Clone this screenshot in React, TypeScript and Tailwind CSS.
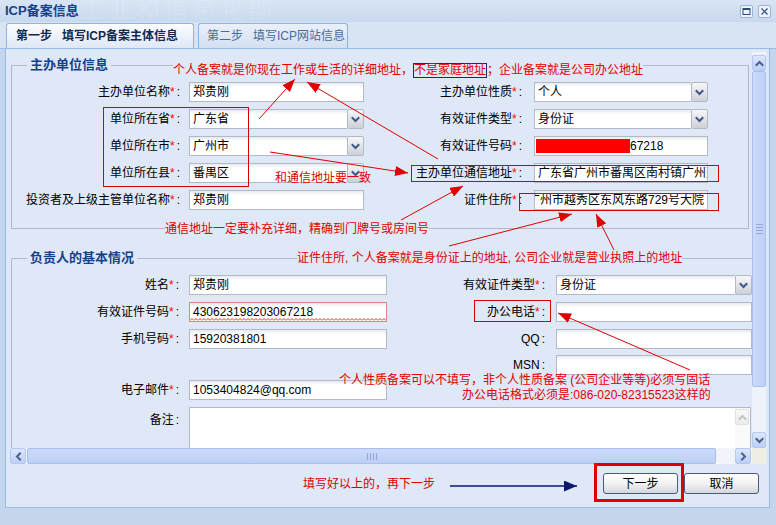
import React from "react";

type Dir = "up" | "down" | "left" | "right";

function Chev({ dir = "down", color = "#3f5b88" }: { dir?: Dir; color?: string }) {
  const d: Record<Dir, string> = {
    down: "M1.5 3 L4.5 6 L7.5 3",
    up: "M1.5 6 L4.5 3 L7.5 6",
    left: "M6 1.5 L3 4.5 L6 7.5",
    right: "M3 1.5 L6 4.5 L3 7.5",
  };
  return (
    <svg width="9" height="9" viewBox="0 0 9 9">
      <path d={d[dir]} stroke={color} strokeWidth="2" fill="none" strokeLinecap="square" />
    </svg>
  );
}

function Lbl({ children, req = true, className = "" }: { children?: React.ReactNode; req?: boolean; className?: string }) {
  return (
    <div className={`flex h-[20px] items-center justify-end whitespace-nowrap ${className}`}>
      <span>{children}</span>
      {req && <span className="text-[#ff0000]">*</span>}
      <span className="ml-[2px]">:</span>
    </div>
  );
}

function TextBox({
  children,
  className = "",
  invalid = false,
  right = false,
}: {
  children?: React.ReactNode;
  className?: string;
  invalid?: boolean;
  right?: boolean;
}) {
  return (
    <div
      className={`relative flex h-[20px] items-center overflow-hidden whitespace-nowrap border bg-[linear-gradient(#e6e9ee,#ffffff_4px)] px-[3px] ${
        invalid ? "border-[#d98a80]" : "border-[#b5b8c8]"
      } ${right ? "justify-end" : ""} ${className}`}
    >
      {children}
      {invalid && (
        <svg className="absolute bottom-0 left-0" width="100%" height="3">
          <defs>
            <pattern id="wave" width="4" height="3" patternUnits="userSpaceOnUse">
              <path d="M0 2.5 L2 0.5 L4 2.5" stroke="#e03020" strokeWidth="1" fill="none" />
            </pattern>
          </defs>
          <rect width="100%" height="3" fill="url(#wave)" />
        </svg>
      )}
    </div>
  );
}

function Combo({ value, className = "" }: { value: string; className?: string }) {
  return (
    <div className={`flex h-[20px] ${className}`}>
      <div className="flex flex-1 items-center overflow-hidden whitespace-nowrap border-y border-l border-[#b5b8c8] bg-[linear-gradient(#e6e9ee,#ffffff_4px)] px-[3px]">
        {value}
      </div>
      <div className="flex h-[20px] w-[17px] items-center justify-center rounded-[2px] border border-[#b3b8c4] bg-gradient-to-b from-[#f7f7f8] to-[#cdd1d8]">
        <Chev dir="down" color="#40598a" />
      </div>
    </div>
  );
}

function SBtn({ dir, disabled = false }: { dir: Dir; disabled?: boolean }) {
  return (
    <div
      className={`flex h-[16px] w-[14px] shrink-0 items-center justify-center rounded-[2px] border ${
        disabled
          ? "border-[#e0e0e0] bg-gradient-to-b from-[#f8f8f8] to-[#ececec]"
          : "border-[#b5c8f2] bg-gradient-to-b from-[#dde7fd] to-[#bccff8]"
      }`}
    >
      <Chev dir={dir} color={disabled ? "#c6c6c6" : "#4d6185"} />
    </div>
  );
}

function HBtn({ dir }: { dir: Dir }) {
  return (
    <div className="flex h-[16px] w-[16px] shrink-0 items-center justify-center rounded-[2px] border border-[#b5c8f2] bg-gradient-to-b from-[#dde7fd] to-[#bccff8]">
      <Chev dir={dir} color="#4d6185" />
    </div>
  );
}

export default function App() {
  const red = "text-[#e00000]";
  return (
    <div className="relative h-[525px] w-[776px] overflow-hidden bg-[#c5d5eb] text-[12px] leading-[14px] text-black font-['Liberation_Sans','Noto_Sans_CJK_SC',sans-serif]">
      {/* title bar */}
      <div className="relative flex h-[22px] items-center justify-between bg-gradient-to-b from-[#d9e5f4] to-[#c8d8ee] px-[5px]">
        <span className="pointer-events-none absolute left-[80px] top-[-5px] text-[24px] leading-[30px] tracking-[4px] text-white/15">
          工业和信息化部
        </span>
        <span className="relative text-[13px] font-bold text-[#15428b]">ICP备案信息</span>
        <div className="relative flex items-center gap-[5px]">
          <svg width="13" height="13" viewBox="0 0 13 13">
            <rect x="0.5" y="0.5" width="12" height="12" rx="1.5" fill="#eef3fa" stroke="#9db3d3" />
            <rect x="3" y="3.5" width="7" height="6" fill="none" stroke="#2b4a7a" />
            <line x1="3" y1="4.5" x2="10" y2="4.5" stroke="#2b4a7a" />
          </svg>
          <svg width="13" height="13" viewBox="0 0 13 13">
            <rect x="0.5" y="0.5" width="12" height="12" rx="1.5" fill="#eef3fa" stroke="#9db3d3" />
            <path d="M3.5 3.5 L9.5 9.5 M9.5 3.5 L3.5 9.5" stroke="#2b4a7a" strokeWidth="1.2" />
          </svg>
        </div>
      </div>

      {/* tabs */}
      <div className="flex h-[27px] items-end gap-[4px] border-b border-[#99bbe8] bg-[#d9e4f3] pl-[6px]">
        <div className="flex h-[25px] w-[188px] items-center rounded-t-[3px] border-x border-t border-[#8db2e3] bg-gradient-to-b from-[#fbfdff] to-[#dfe8f6] pl-[9px] font-bold text-[#15284f]">
          <span>第一步</span>
          <span className="ml-[10px]">填写ICP备案主体信息</span>
        </div>
        <div className="flex h-[25px] w-[150px] items-center rounded-t-[3px] border-x border-t border-[#8db2e3] bg-gradient-to-b from-[#eaf0f9] to-[#d3e0f1] pl-[8px] text-[#4a6a9a]">
          <span>第二步</span>
          <span className="ml-[10px]">填写ICP网站信息</span>
        </div>
      </div>

      {/* panel */}
      <div className="ml-[5px] flex h-[459px] w-[765px] flex-col border-x border-b border-[#99bbe8] bg-[#dfe8f6] pl-[4px] pt-[3px]">
        <div className="grid grid-cols-[742px_14px] grid-rows-[396px_16px]">
          {/* scroll content */}
          <div className="overflow-hidden">
            <div className="w-[780px] pl-[1px] pt-[5px]">
              <fieldset className="w-[738px] border border-[#b5b8c8] px-0 pb-[18px] pt-[9px]">
                <legend className="ml-[15px] px-[3px] text-[13px] font-bold leading-[16px] text-[#15428b]">
                  主办单位信息
                </legend>
                <div className="flex flex-col gap-[7px]">
                  <div className="flex">
                    <Lbl className="w-[177px] pr-[9px]">主办单位名称</Lbl>
                    <TextBox className="w-[175px]">郑贵刚</TextBox>
                    <Lbl className="w-[170px] pr-[12px]">主办单位性质</Lbl>
                    <Combo className="w-[174px]" value="个人" />
                  </div>
                  <div className="flex">
                    <Lbl className="w-[177px] pr-[9px]">单位所在省</Lbl>
                    <Combo className="w-[175px]" value="广东省" />
                    <Lbl className="w-[170px] pr-[12px]">有效证件类型</Lbl>
                    <Combo className="w-[174px]" value="身份证" />
                  </div>
                  <div className="flex">
                    <Lbl className="w-[177px] pr-[9px]">单位所在市</Lbl>
                    <Combo className="w-[175px]" value="广州市" />
                    <Lbl className="w-[170px] pr-[12px]">有效证件号码</Lbl>
                    <TextBox className="w-[174px] pl-[1px]">
                      <span className="h-[14px] w-[94px] shrink-0 bg-[#ff0000]" />
                      <span>67218</span>
                    </TextBox>
                  </div>
                  <div className="flex">
                    <Lbl className="w-[177px] pr-[9px]">单位所在县</Lbl>
                    <Combo className="w-[175px]" value="番禺区" />
                    <Lbl className="w-[170px] pr-[12px]">主办单位通信地址</Lbl>
                    <TextBox className="w-[174px]">广东省广州市番禺区南村镇广州建设路</TextBox>
                  </div>
                  <div className="flex">
                    <Lbl className="w-[177px] pr-[9px]">投资者及上级主管单位名称</Lbl>
                    <TextBox className="w-[175px]">郑贵刚</TextBox>
                    <Lbl className="w-[170px] pr-[12px]">证件住所</Lbl>
                    <TextBox className="w-[174px]" right>
                      广州市越秀区东风东路729号大院
                    </TextBox>
                  </div>
                </div>
              </fieldset>

              <fieldset className="mt-[21px] w-[775px] border border-[#b5b8c8] px-0 pb-[10px] pt-[9px]">
                <legend className="ml-[15px] px-[3px] text-[13px] font-bold leading-[16px] text-[#15428b]">
                  负责人的基本情况
                </legend>
                <div className="flex flex-col">
                  <div className="flex">
                    <Lbl className="w-[177px] pr-[10px]">姓名</Lbl>
                    <TextBox className="w-[198px]">郑贵刚</TextBox>
                    <Lbl className="w-[169px] pr-[11px]">有效证件类型</Lbl>
                    <Combo className="w-[196px]" value="身份证" />
                  </div>
                  <div className="mt-[7px] flex">
                    <Lbl className="w-[177px] pr-[10px]">有效证件号码</Lbl>
                    <TextBox className="w-[198px]" invalid>
                      430623198203067218
                    </TextBox>
                    <Lbl className="w-[169px] pr-[11px]">办公电话</Lbl>
                    <TextBox className="w-[196px]" />
                  </div>
                  <div className="mt-[7px] flex">
                    <Lbl className="w-[177px] pr-[10px]">手机号码</Lbl>
                    <TextBox className="w-[198px]">15920381801</TextBox>
                    <Lbl className="w-[169px] pr-[11px]" req={false}>
                      QQ
                    </Lbl>
                    <TextBox className="w-[196px]" />
                  </div>
                  <div className="mt-[6px] flex">
                    <div className="w-[375px]" />
                    <Lbl className="w-[169px] pr-[11px]" req={false}>
                      MSN
                    </Lbl>
                    <TextBox className="w-[196px]" />
                  </div>
                  <div className="mt-[5px] flex">
                    <Lbl className="w-[177px] pr-[10px]">电子邮件</Lbl>
                    <TextBox className="w-[198px]">1053404824@qq.com</TextBox>
                  </div>
                  <div className="mt-[7px] flex">
                    <div className="flex w-[177px] items-start justify-end pr-[10px] pt-[6px]">
                      <span>备注</span>
                      <span className="ml-[2px]">:</span>
                    </div>
                    <div className="flex h-[60px] w-[562px] justify-end border border-[#b5b8c8] bg-white">
                      <div className="flex w-[15px] flex-col bg-[#fafafa] pt-[1px]">
                        <SBtn dir="up" disabled />
                      </div>
                    </div>
                  </div>
                </div>
              </fieldset>
            </div>
          </div>

          {/* vertical scrollbar */}
          <div className="flex flex-col bg-[#eef2fb] pt-[3px]">
            <SBtn dir="up" />
            <div className="flex h-[316px] items-center justify-center rounded-[2px] border border-[#a9bff0] bg-gradient-to-r from-[#cbdaf8] to-[#bed0f6]">
              <div className="flex flex-col gap-[2px]">
                <div className="h-px w-[7px] bg-[#8ea8dc]" />
                <div className="h-px w-[7px] bg-[#8ea8dc]" />
                <div className="h-px w-[7px] bg-[#8ea8dc]" />
                <div className="h-px w-[7px] bg-[#8ea8dc]" />
              </div>
            </div>
            <div className="flex-1" />
            <SBtn dir="down" />
          </div>

          {/* horizontal scrollbar */}
          <div className="flex items-center bg-[#f2f4fa]">
            <HBtn dir="left" />
            <div className="ml-[1px] flex h-[16px] w-[689px] items-center justify-center rounded-[2px] border border-[#a9bff0] bg-gradient-to-b from-[#cbdaf8] to-[#bed0f6]">
              <div className="flex gap-[2px]">
                <div className="h-[7px] w-px bg-[#8ea8dc]" />
                <div className="h-[7px] w-px bg-[#8ea8dc]" />
                <div className="h-[7px] w-px bg-[#8ea8dc]" />
                <div className="h-[7px] w-px bg-[#8ea8dc]" />
              </div>
            </div>
            <div className="flex-1 bg-white" />
            <HBtn dir="right" />
            <div className="w-px" />
          </div>
          <div className="bg-[#efeee2]" />
        </div>

        {/* footer */}
        <div className="flex flex-1 items-start justify-end gap-[6px] pr-[10px] pt-[9px]">
          <button className="h-[21px] w-[75px] rounded-[3px] border border-[#4c5a78] bg-gradient-to-b from-white via-[#f3f3f3] to-[#d3d6dc] text-[12px]">
            下一步
          </button>
          <button className="h-[21px] w-[75px] rounded-[3px] border border-[#4c5a78] bg-gradient-to-b from-white via-[#f3f3f3] to-[#d3d6dc] text-[12px]">
            取消
          </button>
        </div>
      </div>

      {/* ===== annotations (overlay) ===== */}
      <div className={`absolute left-[173px] top-[63px] flex h-[14px] items-center whitespace-nowrap bg-[#dfe8f6] ${red}`}>
        <span>个人备案就是你现在工作或生活的详细地址，</span>
        <span className="flex h-[15px] items-center border border-[#1a2a6e] px-0">不是家庭地址</span>
        <span>；企业备案就是公司办公地址</span>
      </div>
      <div className={`absolute left-[275px] top-[171px] whitespace-nowrap ${red}`}>和通信地址要一致</div>
      <div className={`absolute left-[165px] top-[222px] whitespace-nowrap bg-[#dfe8f6] ${red}`}>
        通信地址一定要补充详细，精确到门牌号或房间号
      </div>
      <div className={`absolute left-[297px] top-[251px] whitespace-nowrap bg-[#dfe8f6] ${red}`}>
        证件住所, 个人备案就是身份证上的地址, 公司企业就是营业执照上的地址
      </div>
      <div className={`absolute left-[339px] top-[373px] whitespace-nowrap ${red}`}>
        个人性质备案可以不填写，非个人性质备案 (公司企业等等)必须写固话
      </div>
      <div className={`absolute left-[462px] top-[388px] whitespace-nowrap ${red}`}>
        办公电话格式必须是:086-020-82315523这样的
      </div>
      <div className={`absolute left-[303px] top-[477px] whitespace-nowrap ${red}`}>填写好以上的，再下一步</div>

      {/* red boxes */}
      <div className="absolute left-[103px] top-[107px] h-[80px] w-[146px] border border-[#d40000]" />
      <div className="absolute left-[411px] top-[165px] h-[17px] w-[308px] border border-[#d40000]" />
      <div className="absolute left-[519px] top-[193px] h-[18px] w-[200px] border border-[#d40000]" />
      <div className="absolute left-[474px] top-[300px] h-[22px] w-[77px] border border-[#d40000]" />
      <div className="absolute left-[594px] top-[463px] h-[39px] w-[90px] border-[3px] border-[#e00000]" />

      {/* arrows */}
      <svg className="pointer-events-none absolute left-0 top-0" width="776" height="525" viewBox="0 0 776 525">
        <defs>
          <marker id="ah" viewBox="0 0 13 10" refX="13" refY="5" markerWidth="13" markerHeight="10" markerUnits="userSpaceOnUse" orient="auto">
            <path d="M0 0 L13 5 L0 10 Z" fill="#e00000" />
          </marker>
          <marker id="ahb" viewBox="0 0 13 11" refX="13" refY="5.5" markerWidth="13" markerHeight="11" markerUnits="userSpaceOnUse" orient="auto">
            <path d="M0 0 L13 5.5 L0 11 Z" fill="#0b1a70" />
          </marker>
        </defs>
        <g stroke="#e00000" strokeWidth="1" fill="none">
          <line x1="259" y1="119" x2="295" y2="79" markerEnd="url(#ah)" />
          <line x1="438" y1="159" x2="307" y2="82" markerEnd="url(#ah)" />
          <line x1="270" y1="152" x2="408" y2="173" markerEnd="url(#ah)" />
          <line x1="401" y1="220" x2="463" y2="186" markerEnd="url(#ah)" />
          <line x1="449" y1="246" x2="572" y2="214" markerEnd="url(#ah)" />
          <line x1="614" y1="250" x2="596" y2="214" markerEnd="url(#ah)" />
          <line x1="690" y1="370" x2="558" y2="313" markerEnd="url(#ah)" />
        </g>
        <line x1="450" y1="486" x2="577" y2="486" stroke="#0b1a70" strokeWidth="1.5" markerEnd="url(#ahb)" />
      </svg>
    </div>
  );
}
